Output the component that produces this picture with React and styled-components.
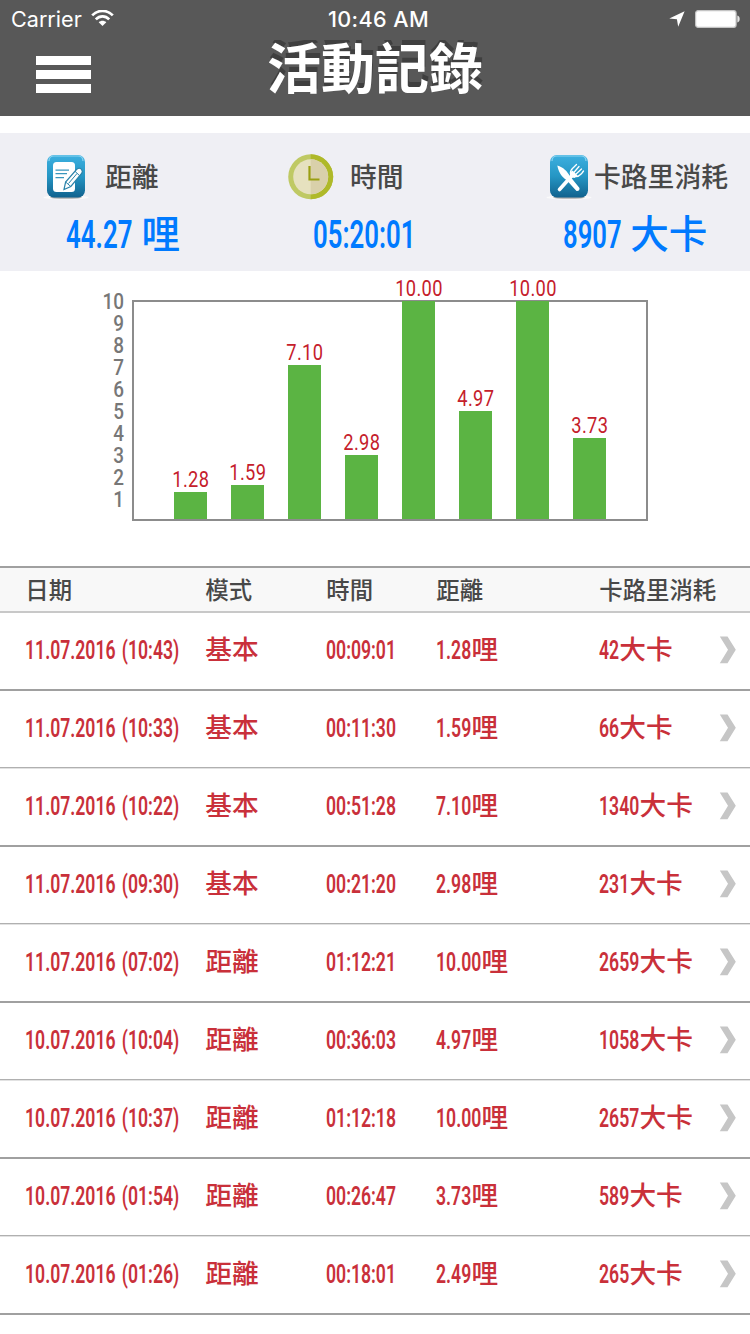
import React, { useLayoutEffect, useRef, useState } from 'react'
import styled, { createGlobalStyle } from 'styled-components'

const COLORS = {
  BAR: '#585858',
  PANEL: '#efeff4',
  BLUE: '#007aff',
  RED: '#c9303a',
  LABEL: '#484848',
  GREEN: '#5bb443',
  FRAME: '#8c8c8c',
}

const GlobalStyle = createGlobalStyle`
  * { box-sizing: border-box; }
  body {
    margin: 0;
    background: #fff;
    font-family: Roboto, 'Noto Sans CJK TC', sans-serif;
  }
`
const Screen = styled.div`
  width: 750px;
  height: 1334px;
  overflow: hidden;
`
const TopBar = styled.header`
  height: 116px;
  background: ${COLORS.BAR};
  color: #fff;
`
const StatusBar = styled.div`
  display: grid;
  grid-template-columns: 1fr auto 1fr;
  align-items: center;
  height: 38px;
  padding: 0 10px 0 11px;
  font-family: Inter, sans-serif;
  font-size: 21.6px;
  line-height: 38px;
`
const Carrier = styled.div`
  display: flex;
  align-items: center;
  gap: 9px;
`
const Clock = styled.div`
  padding-left: 6px;
  font-weight: 500;
  letter-spacing: 0.4px;
`
const Indicators = styled.div`
  display: flex;
  justify-content: flex-end;
  align-items: center;
  gap: 10px;
`
const NavRow = styled.div`
  display: grid;
  grid-template-columns: 1fr auto 1fr;
  height: 78px;
  padding: 0 36px;
`
const MenuButton = styled.div`
  display: flex;
  flex-direction: column;
  gap: 5.6px;
  width: 55px;
  padding-top: 18px;

  span {
    height: 8.6px;
    background: #fff;
  }
`
const Title = styled.h1`
  height: 60px;
  margin: 0;
  font-family: 'Noto Sans CJK TC', sans-serif;
  font-size: 54px;
  font-weight: 700;
  line-height: 55px;
  text-shadow: 1px -5px 0 rgba(0, 0, 0, 0.28);
  clip-path: inset(2px -8px 0 -8px);
`
const Summary = styled.section`
  display: grid;
  grid-template-columns: 250px 250px 250px;
  height: 138px;
  margin-top: 17px;
  background: ${COLORS.PANEL};
`
const SummaryItem = styled.div`
  padding: 20px 0 0 ${props => props.$left}px;
`
const SummaryLabel = styled.div`
  display: flex;
  align-items: center;
  gap: ${props => props.$gap}px;
  height: 48px;
  color: ${COLORS.LABEL};
  font-size: 26.8px;
  font-weight: 500;
  white-space: nowrap;

  span {
    padding-bottom: 3px;
  }
`
const SummaryValue = styled.div`
  display: flex;
  gap: 9px;
  padding-left: ${props => props.$indent}px;
  color: ${COLORS.BLUE};
  font-size: 38.6px;
  font-weight: 500;
  line-height: 68px;
  white-space: nowrap;
`
const Chart = styled.section`
  display: flex;
  height: 295px;
  padding: 29px 0 0 94px;
`
const Axis = styled.div`
  width: 38px;
  padding-right: 8px;
  margin-top: -9px;
  color: #777;
  font-size: 22.5px;
  font-weight: 500;
  line-height: 21.95px;

  div {
    text-align: right;
    transform: scaleX(0.84);
    transform-origin: right center;
  }
`
const Plot = styled.div`
  display: flex;
  align-items: flex-end;
  gap: 24px;
  width: 516px;
  height: 221px;
  padding-left: 40px;
  border: 2px solid ${COLORS.FRAME};
`
const Bar = styled.div`
  display: flex;
  justify-content: center;
  width: 33px;
  background: ${COLORS.GREEN};

  span {
    height: 24px;
    margin-top: -24px;
    color: #c5202b;
    font-size: 21.5px;
    line-height: 24px;
    letter-spacing: 0.4px;
    transform: scaleX(0.85);
  }
`
const Row = styled.div`
  display: grid;
  grid-template-columns: 180px 121px 110px 163px 119.5px 1fr;
  align-items: center;
  height: 78px;
  padding: 0 0 3px 25.3px;
  border-bottom: ${props => props.$strong ? '2px solid #a0a0a0' : '1px solid #e2e2e2'};
  box-shadow: ${props => props.$strong ? 'none' : 'inset 0 -1px 0 #b0b0b0'};
  color: ${COLORS.RED};
  font-size: 26.7px;
  font-weight: 500;
  white-space: nowrap;
`
const HeadRow = styled(Row)`
  height: 47px;
  padding: 2px 0 0 25.3px;
  border-top: 2px solid #a0a0a0;
  border-bottom: 2px solid #c8c8c8;
  box-shadow: none;
  background: #f8f8f8;
  color: ${COLORS.LABEL};
  font-size: 23.4px;
`
const Cell = styled.div`
  display: flex;
  align-items: center;
  line-height: 40px;
`
const Squeezed = styled.span`
  display: inline-block;
  font-weight: 600;
  word-spacing: 3px;
  transform: scaleX(${props => props.$ratio});
  transform-origin: left center;
`

// Narrow numerals: squeezed horizontally, the freed width is given back to the line
const Narrow = ({ children, ratio = 0.66 }) => {
  const ref = useRef(null)
  const [spare, setSpare] = useState(0)
  useLayoutEffect(() => {
    setSpare(ref.current.offsetWidth * (1 - ratio))
  }, [children, ratio])
  return <Squeezed ref={ref} $ratio={ratio} style={{ marginRight: -spare }}>{ children }</Squeezed>
}

const WifiIcon = () => (
  <svg width="23" height="18" viewBox="0 0 23 18" fill="none" stroke="#fff" strokeWidth="2.7">
    <path d="M1.2 5.4C7-.6 16-.6 21.8 5.4" />
    <path d="M4.8 9.4c3.9-4 9.5-4 13.4 0" />
    <path d="M11.5 16 7.7 12.2c2.2-2 5.4-2 7.6 0z" fill="#fff" stroke="none" />
  </svg>
)
const LocationIcon = () => (
  <svg width="16" height="16" viewBox="0 0 16 16">
    <path d="M15.6.3 9.2 15.7 7.9 8.3.3 7.5z" fill="#fff" />
  </svg>
)
const BatteryIcon = () => (
  <svg width="45" height="18" viewBox="0 0 45 18">
    <rect x=".6" y=".6" width="40.5" height="16.8" rx="2.6" fill="#fff" stroke="#c4c4c4" strokeWidth="1.2" />
    <path d="M42.3 5.5c3.2.8 3.2 6.2 0 7z" fill="#e4e4e4" />
  </svg>
)
const Tile = ({ id, children }) => (
  <svg width="46" height="48" viewBox="0 0 46 48">
    <defs>
      <linearGradient id={id} x1="0" y1="0" x2="0" y2="1">
        <stop offset="0" stopColor="#3db0e0" />
        <stop offset=".5" stopColor="#2596c4" />
        <stop offset="1" stopColor="#11628e" />
      </linearGradient>
    </defs>
    <ellipse cx="23" cy="44.5" rx="22.5" ry="2" fill="#fafafa" />
    <ellipse cx="23" cy="44.6" rx="16" ry="1.2" fill="#aaa" />
    <rect x="4" y="2" width="38" height="42.5" rx="7" fill={`url(#${id})`} />
    <path d="M6 8c0-3 2-5 5-5h24c3 0 5 2 5 5" fill="none" stroke="#8bd3f0" strokeWidth="1.2" />
    { children }
  </svg>
)
const NoteIcon = () => (
  <Tile id="noteTile">
    <rect x="10" y="9" width="22" height="30" rx="3.5" fill="#fff" />
    <path d="M12.5 17.2H26M12.5 20.7H24M12.5 24.7H21" stroke="#3a96bd" strokeWidth="1.3" />
    <path d="m21 36.5 1.6-7.5L33.5 16.5q3-2.500 5 0t-.3 4.500L27.8 33.5z" fill="#fff" stroke="#2b83aa" strokeWidth="1.2" />
    <path d="m22.6 29 5.2 4.5M32 18.3l4.5 4.3M25.5 30.5l8.5-10" fill="none" stroke="#2b83aa" strokeWidth="1" />
  </Tile>
)
const CutleryIcon = () => (
  <Tile id="cutleryTile">
    <path d="M11.3 12.5c6 1.5 10 6 12.5 10.5L33.5 35q.3 3.5-3 3L20.5 27c-5-3-8-8.5-9.200-14.500z" fill="#fff" />
    <path d="M13.5 36.5 26.5 22" stroke="#fff" strokeWidth="3.6" strokeLinecap="round" />
    <path d="M24.5 21c-.8-4 1.5-5 3.5-7l2.5-2.5M27 20.5l6-7M29 22l6.5-6M29 23.5c4 .5 5-1.5 7-3.5l1.500-2" fill="none" stroke="#fff" strokeWidth="1.3" strokeLinecap="round" />
    <path d="m24 19.5 2.5-2 5 5-3 2.5-4.5-1z" fill="#fff" />
  </Tile>
)
const ClockIcon = () => (
  <svg width="46" height="46" viewBox="0 0 46 46">
    <circle cx="22.7" cy="22.8" r="22.5" fill="#bfc964" />
    <path d="M22.7.3a22.5 22.5 0 0 1 0 45z" fill="#afb929" />
    <circle cx="22.7" cy="22.8" r="17.5" fill="#e6e1bf" />
    <path d="M22.7 5.3a17.5 17.5 0 0 1 0 35z" fill="#d9d0aa" />
    <path d="M21.5 12v13.5h10" fill="none" stroke="#9a9f12" strokeWidth="2.2" />
  </svg>
)
const Chevron = () => (
  <svg width="18" height="28" viewBox="0 0 18 28">
    <path d="M.8.5h7.7L16.8 13.7 8.5 27.3H.8L9 13.7z" fill="#c6c6c6" />
  </svg>
)

const distances = [1.28, 1.59, 7.1, 2.98, 10, 4.97, 10, 3.73]
const ticks = [10, 9, 8, 7, 6, 5, 4, 3, 2, 1]
const records = [
  ['11.07.2016 (10:43)', '基本', '00:09:01', '1.28', '42'],
  ['11.07.2016 (10:33)', '基本', '00:11:30', '1.59', '66'],
  ['11.07.2016 (10:22)', '基本', '00:51:28', '7.10', '1340'],
  ['11.07.2016 (09:30)', '基本', '00:21:20', '2.98', '231'],
  ['11.07.2016 (07:02)', '距離', '01:12:21', '10.00', '2659'],
  ['10.07.2016 (10:04)', '距離', '00:36:03', '4.97', '1058'],
  ['10.07.2016 (10:37)', '距離', '01:12:18', '10.00', '2657'],
  ['10.07.2016 (01:54)', '距離', '00:26:47', '3.73', '589'],
  ['10.07.2016 (01:26)', '距離', '00:18:01', '2.49', '265'],
]

const App = () => {
  const bars = distances.map((value, i) => (
    <Bar key={`bar_${i}`} style={{ height: Math.min(value * 21.9 - 1, 218) }}>
      <span>{ value.toFixed(2) }</span>
    </Bar>
  ))
  const rows = records.map(([date, mode, time, distance, calories], i) => (
    <Row key={date} $strong={i % 2 === 0}>
      <Cell><Narrow>{ date }</Narrow></Cell>
      <Cell>{ mode }</Cell>
      <Cell><Narrow>{ time }</Narrow></Cell>
      <Cell><Narrow>{ distance }</Narrow>哩</Cell>
      <Cell><Narrow>{ calories }</Narrow>大卡</Cell>
      <Chevron />
    </Row>
  ))
  return (
    <Screen>
      <GlobalStyle />
      <TopBar>
        <StatusBar>
          <Carrier>Carrier <WifiIcon /></Carrier>
          <Clock>10:46 AM</Clock>
          <Indicators><LocationIcon /><BatteryIcon /></Indicators>
        </StatusBar>
        <NavRow>
          <MenuButton><span /><span /><span /></MenuButton>
          <Title>活動記錄</Title>
        </NavRow>
      </TopBar>
      <Summary>
        <SummaryItem $left={43}>
          <SummaryLabel $gap={16}><NoteIcon /><span>距離</span></SummaryLabel>
          <SummaryValue $indent={23}><Narrow ratio={0.67}>44.27</Narrow>哩</SummaryValue>
        </SummaryItem>
        <SummaryItem $left={38}>
          <SummaryLabel $gap={16}><ClockIcon /><span>時間</span></SummaryLabel>
          <SummaryValue $indent={24.5}><Narrow ratio={0.668}>05:20:01</Narrow></SummaryValue>
        </SummaryItem>
        <SummaryItem $left={46}>
          <SummaryLabel $gap={2}><CutleryIcon /><span>卡路里消耗</span></SummaryLabel>
          <SummaryValue $indent={16.5}><Narrow ratio={0.665}>8907</Narrow>大卡</SummaryValue>
        </SummaryItem>
      </Summary>
      <Chart>
        <Axis>{ ticks.map(tick => <div key={tick}>{ tick }</div>) }</Axis>
        <Plot>{ bars }</Plot>
      </Chart>
      <HeadRow>
        <Cell>日期</Cell>
        <Cell>模式</Cell>
        <Cell>時間</Cell>
        <Cell>距離</Cell>
        <Cell>卡路里消耗</Cell>
      </HeadRow>
      { rows }
    </Screen>
  )
}

export default App
